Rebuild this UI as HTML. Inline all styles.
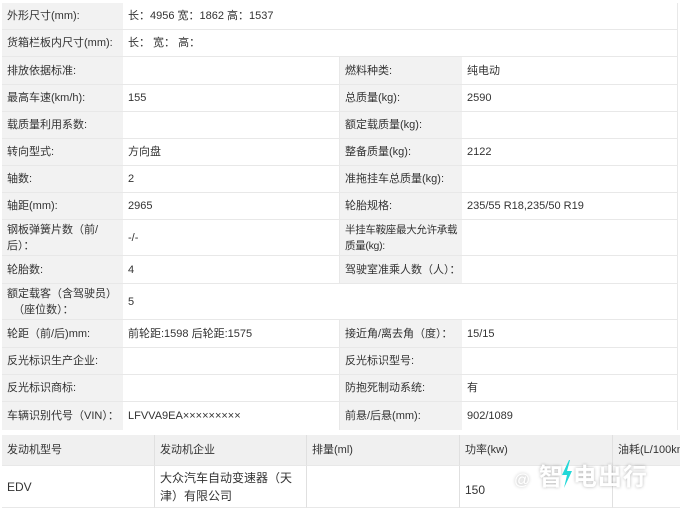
<!DOCTYPE html>
<html><head><meta charset="utf-8"><style>
*{margin:0;padding:0;box-sizing:border-box}
body{width:680px;height:513px;background:#fff;position:relative;overflow:hidden;font-family:"Liberation Sans","Noto Sans CJK SC",sans-serif;font-size:11px;color:#333}
.c{position:absolute;display:flex;align-items:center;padding-left:5px;line-height:16px;border-bottom:1px solid #e8e8e8;white-space:nowrap}
.l{background:#f2f2f2}
.v{background:#fff;border-right:1px solid #e8e8e8}
.h{background:#f0f0f0}
.w{position:absolute;left:514px;top:457px;font-size:24px;font-weight:bold;color:#fff;text-shadow:0 0 3px rgba(0,0,0,.3);letter-spacing:1px;white-space:nowrap}
</style></head><body>
<div class="c l" style="left:2px;top:3px;width:121px;height:27px">外形尺寸(mm):</div>
<div class="c v" style="left:123px;top:3px;width:555px;height:27px">长：4956 宽：1862 高：1537</div>
<div class="c l" style="left:2px;top:30px;width:121px;height:27px">货箱栏板内尺寸(mm):</div>
<div class="c v" style="left:123px;top:30px;width:555px;height:27px">长：&nbsp;宽：&nbsp;高：</div>

<div class="c l" style="left:2px;top:57px;width:121px;height:28px">排放依据标准:</div>
<div class="c v" style="left:123px;top:57px;width:217px;height:28px"></div>
<div class="c l" style="left:340px;top:57px;width:122px;height:28px">燃料种类:</div>
<div class="c v" style="left:462px;top:57px;width:216px;height:28px">纯电动</div>

<div class="c l" style="left:2px;top:85px;width:121px;height:27px">最高车速(km/h):</div>
<div class="c v" style="left:123px;top:85px;width:217px;height:27px">155</div>
<div class="c l" style="left:340px;top:85px;width:122px;height:27px">总质量(kg):</div>
<div class="c v" style="left:462px;top:85px;width:216px;height:27px">2590</div>

<div class="c l" style="left:2px;top:112px;width:121px;height:27px">载质量利用系数:</div>
<div class="c v" style="left:123px;top:112px;width:217px;height:27px"></div>
<div class="c l" style="left:340px;top:112px;width:122px;height:27px">额定载质量(kg):</div>
<div class="c v" style="left:462px;top:112px;width:216px;height:27px"></div>

<div class="c l" style="left:2px;top:139px;width:121px;height:27px">转向型式:</div>
<div class="c v" style="left:123px;top:139px;width:217px;height:27px">方向盘</div>
<div class="c l" style="left:340px;top:139px;width:122px;height:27px">整备质量(kg):</div>
<div class="c v" style="left:462px;top:139px;width:216px;height:27px">2122</div>

<div class="c l" style="left:2px;top:166px;width:121px;height:27px">轴数:</div>
<div class="c v" style="left:123px;top:166px;width:217px;height:27px">2</div>
<div class="c l" style="left:340px;top:166px;width:122px;height:27px">准拖挂车总质量(kg):</div>
<div class="c v" style="left:462px;top:166px;width:216px;height:27px"></div>

<div class="c l" style="left:2px;top:193px;width:121px;height:27px">轴距(mm):</div>
<div class="c v" style="left:123px;top:193px;width:217px;height:27px">2965</div>
<div class="c l" style="left:340px;top:193px;width:122px;height:27px">轮胎规格:</div>
<div class="c v" style="left:462px;top:193px;width:216px;height:27px">235/55 R18,235/50 R19</div>

<div class="c l" style="left:2px;top:220px;width:121px;height:36px">钢板弹簧片数（前/<br>后）：</div>
<div class="c v" style="left:123px;top:220px;width:217px;height:36px">-/-</div>
<div class="c l" style="left:340px;top:220px;width:122px;height:36px;font-size:10.5px;letter-spacing:-0.3px">半挂车鞍座最大允许承载<br>质量(kg):</div>
<div class="c v" style="left:462px;top:220px;width:216px;height:36px"></div>

<div class="c l" style="left:2px;top:256px;width:121px;height:28px">轮胎数:</div>
<div class="c v" style="left:123px;top:256px;width:217px;height:28px">4</div>
<div class="c l" style="left:340px;top:256px;width:122px;height:28px">驾驶室准乘人数（人）：</div>
<div class="c v" style="left:462px;top:256px;width:216px;height:28px"></div>

<div class="c l" style="left:2px;top:284px;width:121px;height:36px">额定载客（含驾驶员）<br>&nbsp;&nbsp;（座位数）：</div>
<div class="c v" style="left:123px;top:284px;width:555px;height:36px">5</div>

<div class="c l" style="left:2px;top:320px;width:121px;height:28px">轮距（前/后)mm:</div>
<div class="c v" style="left:123px;top:320px;width:217px;height:28px">前轮距:1598 后轮距:1575</div>
<div class="c l" style="left:340px;top:320px;width:122px;height:28px">接近角/离去角（度）：</div>
<div class="c v" style="left:462px;top:320px;width:216px;height:28px">15/15</div>

<div class="c l" style="left:2px;top:348px;width:121px;height:27px">反光标识生产企业:</div>
<div class="c v" style="left:123px;top:348px;width:217px;height:27px"></div>
<div class="c l" style="left:340px;top:348px;width:122px;height:27px">反光标识型号:</div>
<div class="c v" style="left:462px;top:348px;width:216px;height:27px"></div>

<div class="c l" style="left:2px;top:375px;width:121px;height:27px">反光标识商标:</div>
<div class="c v" style="left:123px;top:375px;width:217px;height:27px"></div>
<div class="c l" style="left:340px;top:375px;width:122px;height:27px">防抱死制动系统:</div>
<div class="c v" style="left:462px;top:375px;width:216px;height:27px">有</div>

<div class="c l" style="left:2px;top:402px;width:121px;height:28px;border:none">车辆识别代号（VIN）：</div>
<div class="c v" style="left:123px;top:402px;width:217px;height:28px;border-bottom:none">LFVVA9EA×××××××××</div>
<div class="c l" style="left:340px;top:402px;width:122px;height:28px;border:none">前悬/后悬(mm):</div>
<div class="c v" style="left:462px;top:402px;width:216px;height:28px;border-bottom:none">902/1089</div>

<div class="c h" style="left:2px;top:435px;width:153px;height:31px;border-right:1px solid #e0e0e0">发动机型号</div>
<div class="c h" style="left:155px;top:435px;width:152px;height:31px;border-right:1px solid #e0e0e0">发动机企业</div>
<div class="c h" style="left:307px;top:435px;width:153px;height:31px;border-right:1px solid #e0e0e0">排量(ml)</div>
<div class="c h" style="left:460px;top:435px;width:153px;height:31px;border-right:1px solid #e0e0e0">功率(kw)</div>
<div class="c h" style="left:613px;top:435px;width:80px;height:31px">油耗(L/100km)</div>

<div class="c v" style="left:2px;top:466px;width:153px;height:42px;border-right:1px solid #e0e0e0;font-size:12px">EDV</div>
<div class="c v" style="left:155px;top:466px;width:152px;height:42px;border-right:1px solid #e0e0e0;font-size:12px;line-height:18px">大众汽车自动变速器（天<br>津）有限公司</div>
<div class="c v" style="left:307px;top:466px;width:153px;height:42px;border-right:1px solid #e0e0e0"></div>
<div class="c v" style="left:460px;top:466px;width:153px;height:42px;border-right:1px solid #e0e0e0;font-size:12px;padding-top:6px">150</div>
<div class="c v" style="left:613px;top:466px;width:67px;height:42px;border-right:none"></div>

<div class="w"><span style="font-size:16px;font-weight:normal">@</span> 智<span style="display:inline-block;width:9px"></span>电出行</div>
<svg style="position:absolute;left:561px;top:460px" width="12" height="28" viewBox="0 0 12 28"><path d="M8 0 L1 15 L6 15 L3 28 L11 11 L6 11 L9 0 Z" fill="#22d8d8"/></svg>
</body></html>
